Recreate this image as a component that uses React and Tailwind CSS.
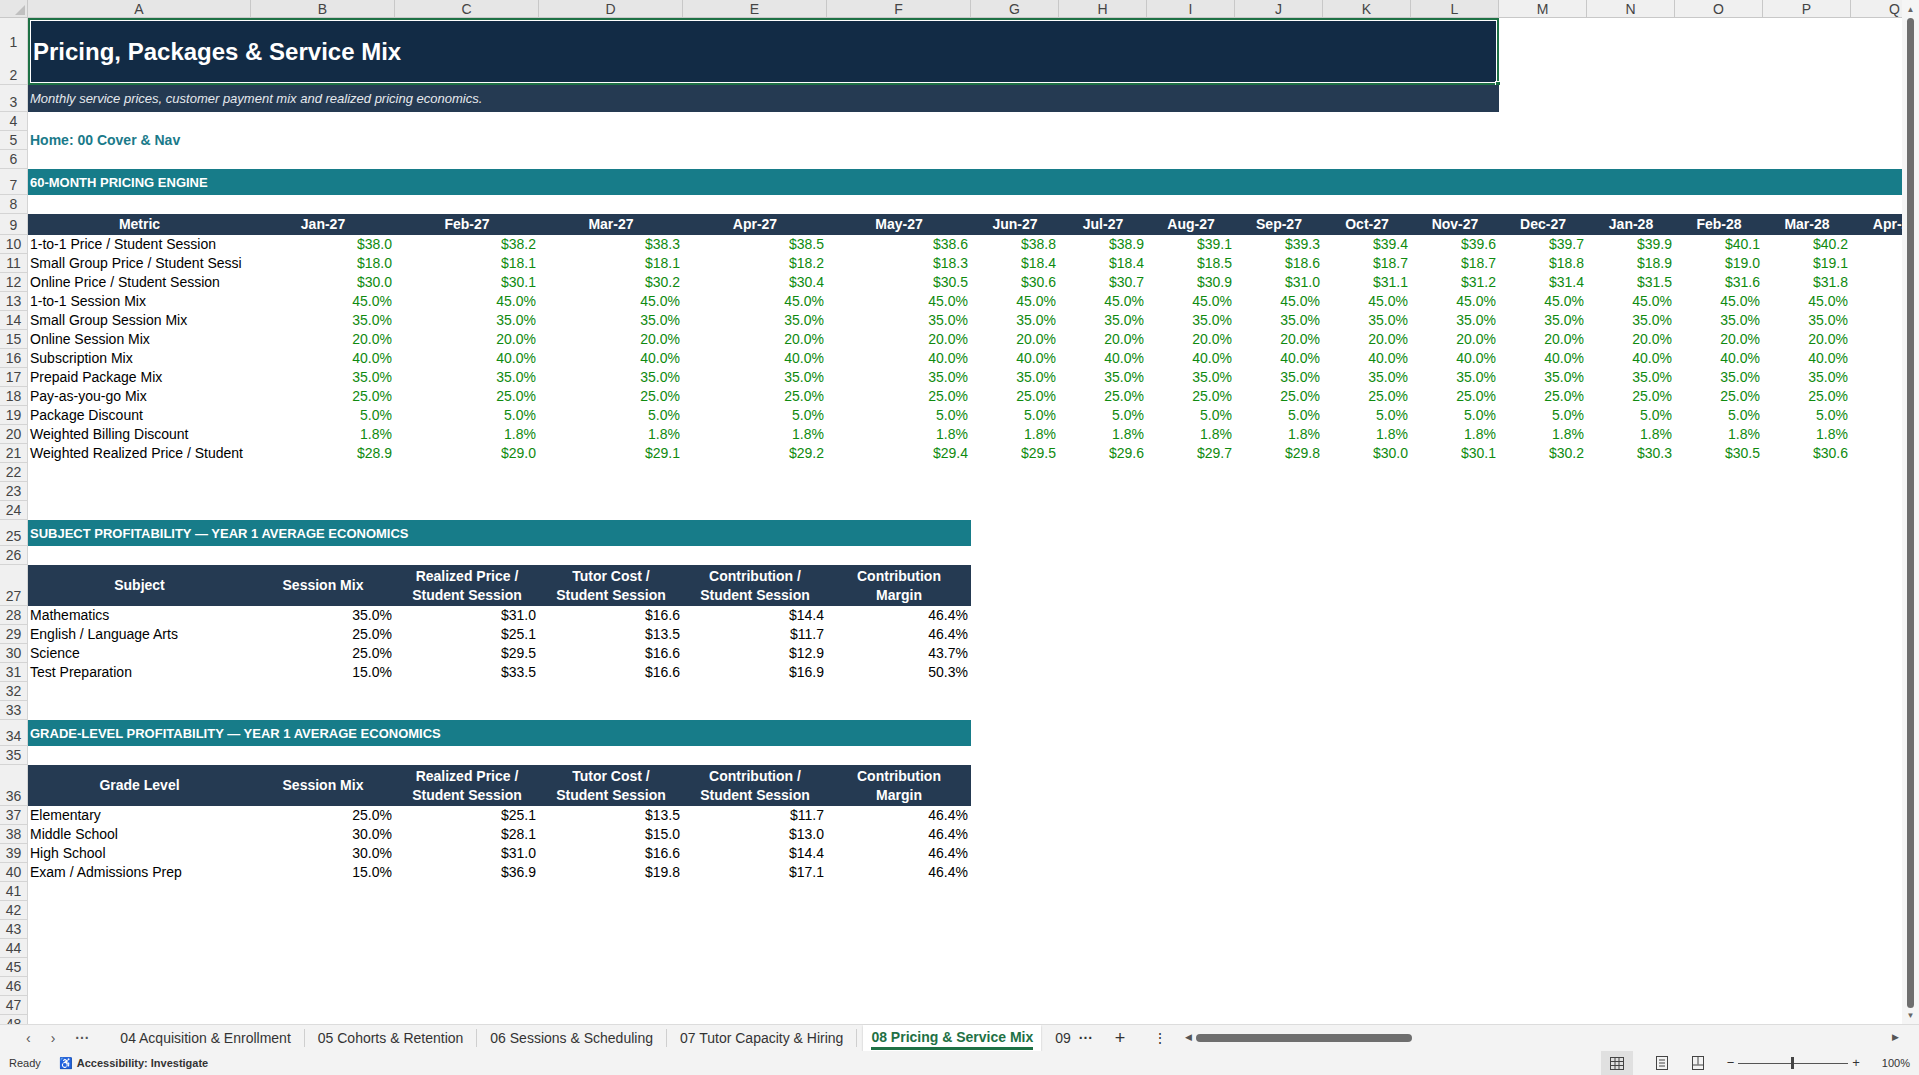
import React from "react";

const W = [223, 144, 144, 144, 144, 144, 88, 88, 88, 88, 88, 88, 88, 88, 88, 88, 88];
const LETTERS = "ABCDEFGHIJKLMNOPQ".split("");
const MONTHS = ["Jan-27","Feb-27","Mar-27","Apr-27","May-27","Jun-27","Jul-27","Aug-27","Sep-27","Oct-27","Nov-27","Dec-27","Jan-28","Feb-28","Mar-28","Apr-28"];
const money = a => a.map(v => "$" + v.toFixed(1));
const pct = (v) => Array(15).fill(v.toFixed(1) + "%");
const ENGINE = [
  ["1-to-1 Price / Student Session", money([38.0,38.2,38.3,38.5,38.6,38.8,38.9,39.1,39.3,39.4,39.6,39.7,39.9,40.1,40.2])],
  ["Small Group Price / Student Sessi", money([18.0,18.1,18.1,18.2,18.3,18.4,18.4,18.5,18.6,18.7,18.7,18.8,18.9,19.0,19.1])],
  ["Online Price / Student Session", money([30.0,30.1,30.2,30.4,30.5,30.6,30.7,30.9,31.0,31.1,31.2,31.4,31.5,31.6,31.8])],
  ["1-to-1 Session Mix", pct(45)],
  ["Small Group Session Mix", pct(35)],
  ["Online Session Mix", pct(20)],
  ["Subscription Mix", pct(40)],
  ["Prepaid Package Mix", pct(35)],
  ["Pay-as-you-go Mix", pct(25)],
  ["Package Discount", pct(5)],
  ["Weighted Billing Discount", pct(1.8)],
  ["Weighted Realized Price / Student", money([28.9,29.0,29.1,29.2,29.4,29.5,29.6,29.7,29.8,30.0,30.1,30.2,30.3,30.5,30.6])],
];
const SUBJ = [
  ["Mathematics","35.0%","$31.0","$16.6","$14.4","46.4%"],
  ["English / Language Arts","25.0%","$25.1","$13.5","$11.7","46.4%"],
  ["Science","25.0%","$29.5","$16.6","$12.9","43.7%"],
  ["Test Preparation","15.0%","$33.5","$16.6","$16.9","50.3%"],
];
const GRADE = [
  ["Elementary","25.0%","$25.1","$13.5","$11.7","46.4%"],
  ["Middle School","30.0%","$28.1","$15.0","$13.0","46.4%"],
  ["High School","30.0%","$31.0","$16.6","$14.4","46.4%"],
  ["Exam / Admissions Prep","15.0%","$36.9","$19.8","$17.1","46.4%"],
];

function Row({ n, h = 19, children, nums }) {
  return (
    <div className="flex shrink-0" style={{ height: h }}>
      <div className="w-[28px] shrink-0 bg-[#f0f0f0] border-r border-b border-[#d4d4d4] flex flex-col text-[14px] text-[#444] items-center">
        {(nums || [n]).map(x => <div key={x} className="flex-1 flex items-end justify-center leading-[18px]">{x}</div>)}
      </div>
      <div className="flex-1 flex overflow-hidden relative">{children}</div>
    </div>
  );
}

function TableHead({ n, labels }) {
  return (
    <Row n={n} h={41}>
      <div className="flex bg-[#253a52] text-white font-bold text-[14px] leading-[19px]">
        {labels.map((l, i) => (
          <div key={i} style={{ width: W[i] }} className="flex items-center justify-center text-center">{l}</div>
        ))}
      </div>
    </Row>
  );
}
function TableRows({ start, rows }) {
  return rows.map((r, k) => (
    <Row key={k} n={start + k}>
      {r.map((c, i) => (
        <div key={i} style={{ width: W[i] }} className={`shrink-0 text-[14px] leading-[19px] whitespace-nowrap overflow-hidden ${i === 0 ? "pl-[2px]" : "text-right pr-[3px]"} text-black`}>{c}</div>
      ))}
    </Row>
  ));
}
function Section({ n, text, full }) {
  return (
    <Row n={n} h={26}>
      <div className="bg-[#177c89] text-white font-bold text-[13px] flex items-center pl-[2px] pt-[2px]" style={{ width: full ? "100%" : 943 }}>{text}</div>
    </Row>
  );
}
const Empty = ({ n }) => <Row n={n} />;

export default function App() {
  const headLabels = (first) => [first, "Session Mix",
    <span>Realized Price /<br />Student Session</span>,
    <span>Tutor Cost /<br />Student Session</span>,
    <span>Contribution /<br />Student Session</span>,
    <span>Contribution<br />Margin</span>];
  return (
    <div className="w-[1919px] h-[1075px] overflow-hidden bg-white flex flex-col" style={{ fontFamily: '"Liberation Sans", Arial, sans-serif' }}>
      <div className="flex flex-1 min-h-0">
        <div className="flex-1 flex flex-col overflow-hidden">
          <div className="flex h-[18px] shrink-0 bg-[#e6e6e6] border-b border-[#c8c8c8]">
            <div className="w-[28px] shrink-0 border-r border-[#c8c8c8] relative">
              <div className="absolute right-[2px] bottom-[2px] w-0 h-0 border-l-[10px] border-l-transparent border-b-[10px] border-b-[#c0c0c0]" />
            </div>
            {LETTERS.map((l, i) => (
              <div key={l} style={{ width: W[i] }} className={`shrink-0 text-center text-[14px] leading-[18px] text-[#444] border-r border-[#c8c8c8] ${i >= 12 ? "bg-[#f0f0f0]" : ""}`}>{l}</div>
            ))}
          </div>
          <Row h={67} nums={[1, 2]}>
            <div className="w-[1471px] bg-[#122b45] border-2 border-[#1e7145] outline outline-1 outline-white -outline-offset-[3px] flex items-center pl-[3px] relative">
              <span className="text-white font-bold text-[24px]">Pricing, Packages &amp; Service Mix</span>
              <div className="absolute -right-[4px] -bottom-[4px] w-[6px] h-[6px] bg-[#1e7145] border border-white" />
            </div>
          </Row>
          <Row n={3} h={27}>
            <div className="w-[1471px] bg-[#253a52] text-[#e6e9ee] italic text-[13px] flex items-center pl-[2px]">Monthly service prices, customer payment mix and realized pricing economics.</div>
          </Row>
          <Empty n={4} />
          <Row n={5}><div className="pl-[2px] text-[14px] font-bold text-[#1a7a8a] leading-[19px]">Home: 00 Cover &amp; Nav</div></Row>
          <Empty n={6} />
          <Section n={7} text="60-MONTH PRICING ENGINE" full />
          <Empty n={8} />
          <Row n={9} h={21}>
            <div className="flex bg-[#253a52] text-white font-bold text-[14px] leading-[21px] w-full">
              <div style={{ width: W[0] }} className="shrink-0 text-center">Metric</div>
              {MONTHS.map((m, i) => <div key={m} style={{ width: W[i + 1] }} className="shrink-0 text-center whitespace-nowrap">{m}</div>)}
            </div>
          </Row>
          {ENGINE.map(([label, vals], k) => (
            <Row key={k} n={10 + k}>
              <div style={{ width: W[0] }} className="shrink-0 pl-[2px] text-[14px] leading-[19px] whitespace-nowrap overflow-hidden">{label}</div>
              {vals.map((v, i) => <div key={i} style={{ width: W[i + 1] }} className="shrink-0 text-right pr-[3px] text-[14px] leading-[19px] text-[#0f8a0f] whitespace-nowrap">{v}</div>)}
            </Row>
          ))}
          <Empty n={22} /><Empty n={23} /><Empty n={24} />
          <Section n={25} text="SUBJECT PROFITABILITY — YEAR 1 AVERAGE ECONOMICS" />
          <Empty n={26} />
          <TableHead n={27} labels={headLabels("Subject")} />
          <TableRows start={28} rows={SUBJ} />
          <Empty n={32} /><Empty n={33} />
          <Section n={34} text="GRADE-LEVEL PROFITABILITY — YEAR 1 AVERAGE ECONOMICS" />
          <Empty n={35} />
          <TableHead n={36} labels={headLabels("Grade Level")} />
          <TableRows start={37} rows={GRADE} />
          {[41, 42, 43, 44, 45, 46, 47, 48].map(n => <Empty key={n} n={n} />)}
        </div>
        <div className="w-[17px] shrink-0 bg-[#f5f5f5] flex flex-col items-center pt-[4px] pb-[2px]">
          <div className="text-[8px] text-[#666]">▲</div>
          <div className="w-[7px] h-[990px] mt-[2px] rounded bg-[#6e6e6e]" />
          <div className="text-[8px] text-[#666] mt-auto">▼</div>
        </div>
      </div>
      <div className="h-[27px] shrink-0 bg-[#f3f3f3] border-t border-[#dcdcdc] flex items-center text-[14px] text-[#333]">
        <div className="flex items-center gap-[20px] pl-[26px] pr-[18px] text-[#555]">
          <span>‹</span><span>›</span><span className="font-bold">···</span>
        </div>
        {["04 Acquisition & Enrollment", "05 Cohorts & Retention", "06 Sessions & Scheduling", "07 Tutor Capacity & Hiring"].map(t => (
          <div key={t} className="px-[13px] border-r border-[#cfcfcf] leading-[18px] whitespace-nowrap">{t}</div>
        ))}
        <div className="px-[8px] mx-[6px] h-[27px] bg-white flex flex-col justify-center shadow-[0_1px_2px_rgba(0,0,0,0.2)]">
          <span className="text-[#1e7145] font-semibold whitespace-nowrap leading-[20px]">08 Pricing &amp; Service Mix</span>
          <div className="h-[3px] bg-[#1e7145]" />
        </div>
        <span className="ml-[8px]">09</span><span className="ml-[8px] font-bold">···</span>
        <span className="ml-[22px] text-[18px]">+</span>
        <span className="ml-[28px]">⋮</span>
        <div className="ml-[18px] flex-1 mr-[20px] flex items-center">
          <span className="text-[9px] text-[#555]">◀</span>
          <div className="w-[216px] h-[8px] rounded bg-[#6e6e6e] ml-[4px]" />
          <span className="ml-auto text-[9px] text-[#555]">▶</span>
        </div>
      </div>
      <div className="h-[24px] shrink-0 bg-[#f3f3f3] flex items-center text-[11px] text-[#333] px-[9px]">
        <span>Ready</span>
        <span className="ml-[18px] mr-[4px]">♿</span>
        <span className="font-semibold">Accessibility: Investigate</span>
        <div className="ml-auto flex items-center gap-[22px]">
          <div className="w-[32px] h-[24px] bg-[#e0e0e0] flex items-center justify-center">
            <svg width="14" height="13" viewBox="0 0 14 13"><rect x="0.5" y="0.5" width="13" height="12" fill="none" stroke="#444"/><path d="M0 4.5h14M0 8.5h14M5 0v13M9 0v13" stroke="#444"/></svg>
          </div>
          <svg width="14" height="14" viewBox="0 0 14 14"><rect x="1.5" y="0.5" width="11" height="13" fill="none" stroke="#444"/><path d="M4 4h6M4 7h6M4 10h6" stroke="#444"/></svg>
          <svg width="14" height="14" viewBox="0 0 14 14"><rect x="1.5" y="0.5" width="11" height="13" fill="none" stroke="#444"/><path d="M1.5 9h11M7 0.5v8" stroke="#444"/></svg>
          <div className="flex items-center gap-[4px] text-[13px]">
            <span>−</span>
            <div className="w-[110px] h-[1px] bg-[#555] relative"><div className="absolute left-[53px] -top-[6px] w-[3px] h-[12px] bg-[#444]" /></div>
            <span>+</span>
          </div>
          <span>100%</span>
        </div>
      </div>
    </div>
  );
}
